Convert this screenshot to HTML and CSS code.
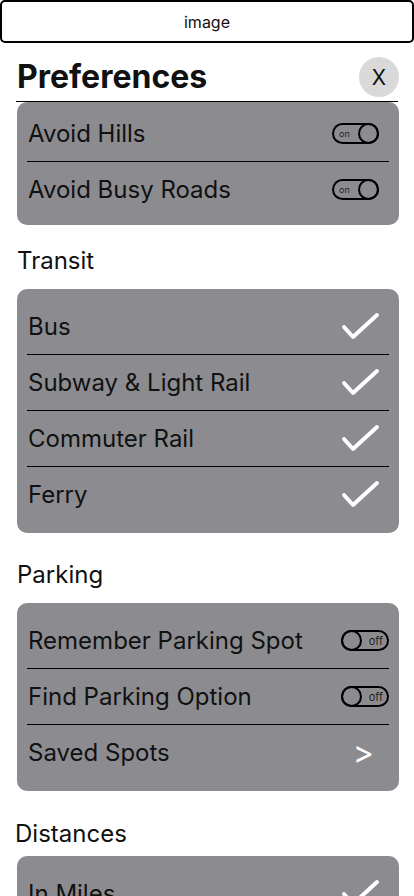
FILE: index.html
```html
<!DOCTYPE html>
<html lang="en">
<head>
<meta charset="UTF-8">
<meta name="viewport" content="width=device-width, initial-scale=1.0">
<title>Preferences</title>
<link rel="stylesheet" href="styles.css">
</head>
<body>
    <div class="image-box">image</div>

    <header class="header">
        <h1>Preferences</h1>
        <button class="close">X</button>
    </header>

    <div class="card card-tight">
        <div class="row">
            <span>Avoid Hills</span>
            <span class="toggle toggle-on"><span class="toggle-text">on</span><span class="knob"></span></span>
        </div>
        <div class="row">
            <span>Avoid Busy Roads</span>
            <span class="toggle toggle-on"><span class="toggle-text">on</span><span class="knob"></span></span>
        </div>
    </div>

    <h2 class="section-title first">Transit</h2>
    <div class="card">
        <div class="row">
            <span>Bus</span>
            <svg class="check" viewBox="0 0 40 30"><polyline points="4,15 13,25 37,3"/></svg>
        </div>
        <div class="row">
            <span>Subway &amp; Light Rail</span>
            <svg class="check" viewBox="0 0 40 30"><polyline points="4,15 13,25 37,3"/></svg>
        </div>
        <div class="row">
            <span>Commuter Rail</span>
            <svg class="check" viewBox="0 0 40 30"><polyline points="4,15 13,25 37,3"/></svg>
        </div>
        <div class="row">
            <span>Ferry</span>
            <svg class="check" viewBox="0 0 40 30"><polyline points="4,15 13,25 37,3"/></svg>
        </div>
    </div>

    <h2 class="section-title">Parking</h2>
    <div class="card">
        <div class="row">
            <span>Remember Parking Spot</span>
            <span class="toggle toggle-off"><span class="knob"></span><span class="toggle-text">off</span></span>
        </div>
        <div class="row">
            <span>Find Parking Option</span>
            <span class="toggle toggle-off"><span class="knob"></span><span class="toggle-text">off</span></span>
        </div>
        <div class="row">
            <span>Saved Spots</span>
            <span class="chevron">&gt;</span>
        </div>
    </div>

    <h2 class="section-title last">Distances</h2>
    <div class="card">
        <div class="row">
            <span>In Miles</span>
            <svg class="check" viewBox="0 0 40 30"><polyline points="4,15 13,25 37,3"/></svg>
        </div>
        <div class="row">
            <span>In Kilometers</span>
        </div>
    </div>
</body>
</html>
```

FILE: styles.css
```css
body {
    margin: 0;
    font-family: Inter, "Noto Sans", sans-serif;
    background-color: #fff;
    color: #111;
}
.image-box {
    height: 43px;
    box-sizing: border-box;
    border: 2px solid #000;
    border-radius: 5px;
    display: flex;
    align-items: center;
    justify-content: center;
    font-size: 16px;
}
.header {
    display: flex;
    align-items: center;
    justify-content: space-between;
    margin: 0 16px 0 16px;
    padding: 14px 0 4px 1px;
    border-bottom: 1px solid #000;
}
.header h1 {
    margin: 0;
    font-size: 32px;
    font-weight: 700;
    line-height: 40px;
}
.close {
    width: 40px;
    height: 40px;
    border: none;
    border-radius: 50%;
    background-color: #d9d9d9;
    font-family: Inter, sans-serif;
    font-size: 21px;
    color: #111;
    padding: 0;
    margin-right: -1px;
}
.card {
    margin: 0 15px 0 17px;
    padding: 10px 10px 11px;
    background-color: #8c8c90;
    border-radius: 10px;
}
.card-tight {
    padding: 4px 10px 8px;
}
.row {
    height: 55px;
    display: flex;
    align-items: center;
    justify-content: space-between;
    padding-left: 1px;
    font-size: 24px;
    border-bottom: 1px solid #000;
}
.row:last-child {
    border-bottom: none;
}
.section-title {
    margin: 28px 0 14px 17px;
    font-size: 24px;
    font-weight: 400;
    line-height: 28px;
}
.section-title.first {
    margin-top: 22px;
}
.section-title.last {
    margin: 29px 0 8px 15px;
}
.toggle {
    height: 21px;
    box-sizing: border-box;
    border: 2px solid #000;
    border-radius: 11px;
    display: flex;
    align-items: center;
}
.toggle-on {
    width: 47px;
    margin-right: 10px;
    justify-content: space-between;
}
.toggle-off {
    width: 48px;
    justify-content: space-between;
}
.knob {
    width: 21px;
    height: 21px;
    box-sizing: border-box;
    border: 2px solid #000;
    border-radius: 50%;
}
.toggle-on .knob {
    margin: -2px -2px -2px 0;
}
.toggle-off .knob {
    margin: -2px 0 -2px -2px;
}
.toggle-text {
    font-size: 9px;
    color: #222;
}
.toggle-on .toggle-text {
    padding-left: 5px;
}
.toggle-off .toggle-text {
    font-size: 11px;
    padding-right: 4px;
}
.check {
    width: 40px;
    height: 30px;
    margin-right: 9px;
}
.check polyline {
    fill: none;
    stroke: #fff;
    stroke-width: 4;
    stroke-linecap: round;
    stroke-linejoin: round;
}
.chevron {
    color: #fff;
    font-size: 32px;
    margin-right: 15px;
}
```
